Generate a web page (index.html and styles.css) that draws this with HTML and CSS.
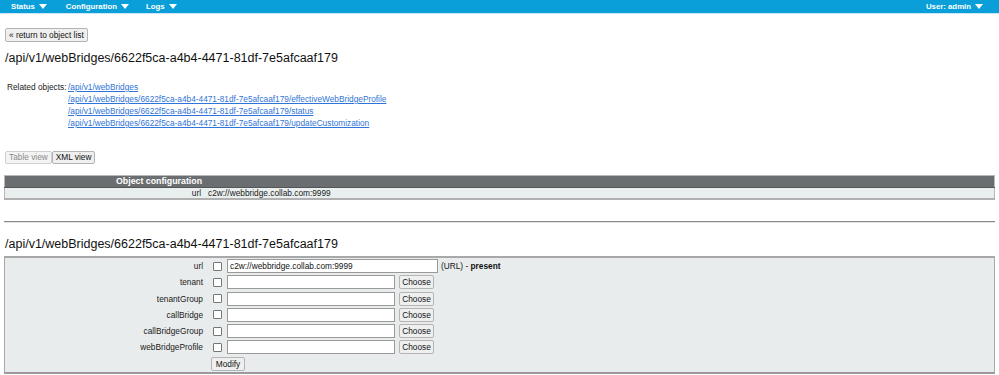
FILE: index.html
```html
<!DOCTYPE html>
<html>
<head>
<meta charset="utf-8">
<link rel="stylesheet" href="styles.css">
</head>
<body>
<div class="nav">
  <div class="nav-left">
    <span class="nav-item">Status <span class="tri"></span></span>
    <span class="nav-item">Configuration <span class="tri"></span></span>
    <span class="nav-item">Logs <span class="tri"></span></span>
  </div>
  <div class="nav-right">
    <span class="nav-item">User: admin <span class="tri"></span></span>
  </div>
</div>
<div class="content">
  <div class="row-back"><button class="btn">« return to object list</button></div>
  <h1 class="title">/api/v1/webBridges/6622f5ca-a4b4-4471-81df-7e5afcaaf179</h1>
  <div class="related">
    <span class="rel-label">Related objects:</span>
    <div class="rel-links">
      <a href="#">/api/v1/webBridges</a>
      <a href="#">/api/v1/webBridges/6622f5ca-a4b4-4471-81df-7e5afcaaf179/effectiveWebBridgeProfile</a>
      <a href="#">/api/v1/webBridges/6622f5ca-a4b4-4471-81df-7e5afcaaf179/status</a>
      <a href="#">/api/v1/webBridges/6622f5ca-a4b4-4471-81df-7e5afcaaf179/updateCustomization</a>
    </div>
  </div>
  <div class="views">
    <button class="btn disabled">Table view</button><button class="btn">XML view</button>
  </div>
  <table class="config">
    <tr class="head"><th class="c1">Object configuration</th><th></th></tr>
    <tr class="data"><td class="c1">url</td><td class="c2">c2w://webbridge.collab.com:9999</td></tr>
  </table>
  <div class="sep"></div>
  <h2 class="title title2">/api/v1/webBridges/6622f5ca-a4b4-4471-81df-7e5afcaaf179</h2>
  <div class="form">
    <div class="frow">
      <span class="flabel">url</span><span class="cb"></span><span class="inp wide">c2w://webbridge.collab.com:9999</span><span class="note">(URL) - <b>present</b></span>
    </div>
    <div class="frow">
      <span class="flabel">tenant</span><span class="cb"></span><span class="inp"></span><button class="btn choose">Choose</button>
    </div>
    <div class="frow">
      <span class="flabel">tenantGroup</span><span class="cb"></span><span class="inp"></span><button class="btn choose">Choose</button>
    </div>
    <div class="frow">
      <span class="flabel">callBridge</span><span class="cb"></span><span class="inp"></span><button class="btn choose">Choose</button>
    </div>
    <div class="frow">
      <span class="flabel">callBridgeGroup</span><span class="cb"></span><span class="inp"></span><button class="btn choose">Choose</button>
    </div>
    <div class="frow">
      <span class="flabel">webBridgeProfile</span><span class="cb"></span><span class="inp"></span><button class="btn choose">Choose</button>
    </div>
    <div class="frow">
      <span class="flabel"></span><button class="btn modify">Modify</button>
    </div>
  </div>
</div>
</body>
</html>
```
FILE: styles.css
```css
html, body {
  margin: 0;
  padding: 0;
  background: #ffffff;
}
body {
  font-family: "Liberation Sans", Arial, sans-serif;
  font-size: 8.3px;
  color: #1a1a1a;
}
.nav {
  height: 13px;
  background: #0a9fd8;
  border-bottom: 1px solid #c9e8f4;
  display: flex;
  justify-content: space-between;
  align-items: center;
  color: #fff;
  font-weight: bold;
  font-size: 7.8px;
}
.nav-left {
  display: flex;
  padding-left: 11px;
  gap: 17px;
}
.nav-left .nav-item:nth-child(2) { margin-left: 2px; }
.nav-right {
  padding-right: 16px;
}
.nav-item {
  display: inline-flex;
  align-items: center;
  gap: 4px;
  white-space: nowrap;
}
.tri {
  display: inline-block;
  width: 0;
  height: 0;
  border-left: 4px solid transparent;
  border-right: 4px solid transparent;
  border-top: 5px solid #fff;
}
.content {
  padding: 0 4px;
}
.btn {
  font-family: "Liberation Sans", Arial, sans-serif;
  font-size: 8.3px;
  color: #111;
  background: #efefef;
  border: 1px solid #b4b4b4;
  border-radius: 2px;
  padding: 0 3px;
  height: 14px;
  line-height: 12px;
  margin: 0;
}
.btn.disabled {
  color: #8a8a8a;
  background: #f4f4f4;
  border-color: #cfcfcf;
}
.row-back {
  margin-top: 14px;
  padding-left: 1px;
  height: 14px;
}
.title {
  margin: 9px 0 0 1px;
  font-weight: normal;
  font-size: 12.5px;
  line-height: 15px;
  color: #111;
}
.related {
  margin-top: 15px;
  display: flex;
  padding-left: 3px;
  line-height: 12px;
}
.rel-label {
  width: 61px;
}
.rel-links {
  display: flex;
  flex-direction: column;
}
.rel-links a {
  color: #2f74d8;
  text-decoration: underline;
}
.views {
  margin-top: 22px;
  padding-left: 1px;
  display: flex;
  height: 13px;
}
.views .btn {
  height: 13px;
  line-height: 11px;
}
.config {
  margin-top: 11px;
  width: 100%;
  border-collapse: collapse;
  border: 1px solid #b8b8b8;
  border-bottom: 2px solid #b0b0b0;
}
.config th, .config td {
  padding: 0;
}
.config .head th {
  height: 11px;
  line-height: 11px;
  border-bottom: 1px solid #555;
}
.config .data td {
  height: 10px;
  line-height: 10px;
}
.config .head {
  background: #6b6e70;
  color: #fff;
  font-size: 8.8px;
}
.config .data {
  background: #e9eeee;
}
.config .c1 {
  width: 196px;
  text-align: right;
  padding-right: 2px;
}
.config .data .c1 {
  padding-right: 3px;
}
.config .c2 {
  text-align: left;
  padding-left: 4px;
}
.sep {
  margin-top: 21px;
  border-top: 1px solid #8a8a8a;
  border-bottom: 1px solid #e2e2e2;
}
.title2 {
  margin-top: 14px;
}
.form {
  margin-top: 4px;
  background: #e9ecec;
  border: 1px solid #a8a8a8;
  border-top: 2px solid #a8a8a8;
  border-bottom: 2px solid #9a9a9a;
  padding: 0;
}
.frow {
  display: flex;
  align-items: center;
  height: 16.25px;
}
.flabel {
  width: 198px;
  text-align: right;
}
.cb {
  width: 7px;
  height: 7px;
  border: 1px solid #777;
  border-radius: 1px;
  background: #fff;
  margin-left: 10px;
}
.inp {
  margin-left: 5px;
  width: 164px;
  height: 12px;
  line-height: 12px;
  border: 1px solid #9a9a9a;
  background: #fff;
  padding-left: 2px;
  color: #111;
}
.inp.wide {
  width: 207px;
}
.note {
  margin-left: 3px;
  color: #111;
}
.note b { font-weight: bold; }
.choose {
  margin-left: 4px;
  height: 14px;
  width: 35px;
  padding: 0;
  text-align: center;
}
.modify {
  margin-left: 8px;
  width: 34px;
  padding: 0;
  height: 14px;
}
```
